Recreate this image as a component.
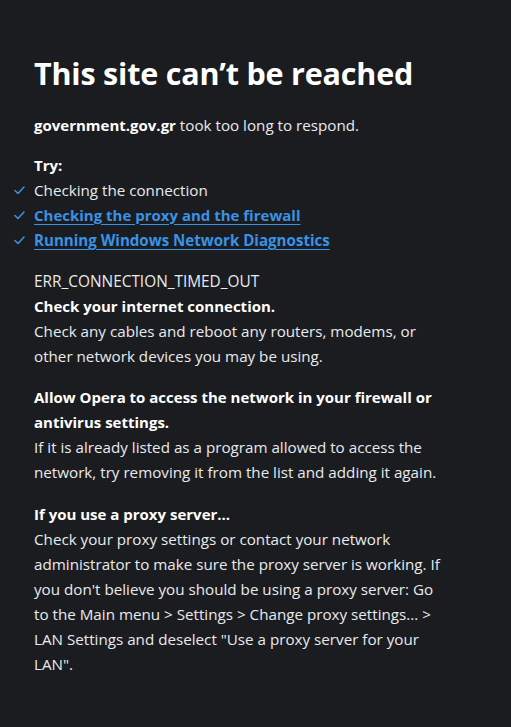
import React from "react";

function Check() {
  return (
    <svg
      className="absolute left-[-20px] top-[8px]"
      width="11"
      height="9"
      viewBox="0 0 11 9"
      fill="none"
    >
      <polyline
        points="1,4.5 4,7.5 10,1"
        stroke="#3b8fdd"
        strokeWidth="1.6"
        strokeLinecap="round"
        strokeLinejoin="round"
      />
    </svg>
  );
}

export default function App() {
  return (
    <div
      className="min-h-[727px] w-full bg-[#1b1c20] text-[#e8eaed] px-[34px] pt-[56px] text-[15.2px] leading-[25px]"
      style={{ fontFamily: '"Open Sans", "Noto Sans", sans-serif' }}
    >
      <h1 className="text-[30.5px] leading-[35px] font-bold text-white tracking-[-0.2px]">
        This site can’t be reached
      </h1>
      <p className="mt-[22px]">
        <span className="font-bold text-white text-[15px]">government.gov.gr</span> took too long to respond.
      </p>
      <div className="mt-[15px]">
        <p className="font-bold text-white text-[15px]">Try:</p>
        <ul>
          <li className="relative">
            <Check />
            Checking the connection
          </li>
          <li className="relative">
            <Check />
            <a className="font-bold text-[15px] text-[#3a92e4] underline underline-offset-[3px]">
              Checking the proxy and the firewall
            </a>
          </li>
          <li className="relative">
            <Check />
            <a className="font-bold text-[15.1px] text-[#3a92e4] underline underline-offset-[3px]">
              Running Windows Network Diagnostics
            </a>
          </li>
        </ul>
      </div>
      <p className="mt-[16px] text-[15.4px]">ERR_CONNECTION_TIMED_OUT</p>
      <p className="font-bold text-white text-[15px]">Check your internet connection.</p>
      <p className="whitespace-nowrap">
        Check any cables and reboot any routers, modems, or
        <br />
        other network devices you may be using.
      </p>
      <p className="mt-[16px] font-bold text-white text-[15px] whitespace-nowrap">
        Allow Opera to access the network in your firewall or
        <br />
        antivirus settings.
      </p>
      <p className="whitespace-nowrap">
        If it is already listed as a program allowed to access the
        <br />
        network, try removing it from the list and adding it again.
      </p>
      <p className="mt-[17px] font-bold text-white text-[15px]">If you use a proxy server...</p>
      <p className="whitespace-nowrap">
        Check your proxy settings or contact your network
        <br />
        administrator to make sure the proxy server is working. If
        <br />
        you don't believe you should be using a proxy server: Go
        <br />
        to the Main menu &gt; Settings &gt; Change proxy settings... &gt;
        <br />
        LAN Settings and deselect "Use a proxy server for your
        <br />
        LAN".
      </p>
    </div>
  );
}
